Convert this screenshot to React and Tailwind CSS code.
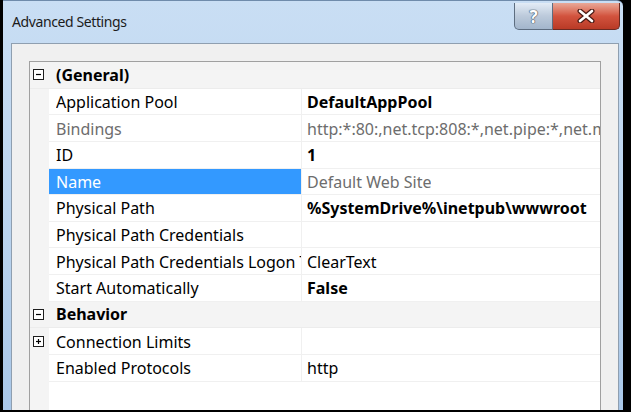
import React from 'react';

const rows = [
  { type: 'cat', label: '(General)', open: true },
  { label: 'Application Pool', value: 'DefaultAppPool', bold: true },
  { label: 'Bindings', value: 'http:*:80:,net.tcp:808:*,net.pipe:*,net.msmq.localhost,msmq.formatname:localhost', dim: true },
  { label: 'ID', value: '1', bold: true },
  { label: 'Name', value: 'Default Web Site', selected: true, valueDim: true },
  { label: 'Physical Path', value: '%SystemDrive%\\inetpub\\wwwroot', bold: true },
  { label: 'Physical Path Credentials', value: '' },
  { label: 'Physical Path Credentials Logon Type', value: 'ClearText' },
  { label: 'Start Automatically', value: 'False', bold: true },
  { type: 'cat', label: 'Behavior', open: true },
  { label: 'Connection Limits', value: '', expander: true },
  { label: 'Enabled Protocols', value: 'http' },
];

function Box({ open }) {
  return (
    <svg width="11" height="11" viewBox="0 0 11 11" className="shrink-0">
      <rect x="0.5" y="0.5" width="10" height="10" fill="#fff" stroke="#1e1e1e" />
      <path d="M3 5.5h5" stroke="#000" strokeWidth="1.2" />
      {!open && <path d="M5.5 3v5" stroke="#000" strokeWidth="1.2" />}
    </svg>
  );
}

export default function App() {
  return (
    <div className="w-[631px] h-[412px] bg-black pl-[3px] pr-[8px] pb-[2px] overflow-hidden" style={{ fontFamily: '"Noto Sans", "Open Sans", sans-serif' }}>
      {/* window frame */}
      <div className="h-full flex flex-col rounded-tr-[6px] bg-gradient-to-b from-[#c9def4] via-[#bcd5ef] to-[#a9c7e8] border-t border-[#6f8bab]">
        {/* title bar */}
        <div className="h-[42px] shrink-0 flex items-start justify-between pl-[9px]">
          <span className="mt-[14px] text-[14px] text-[#1b1b1b] tracking-[-0.4px] leading-none">Advanced Settings</span>
          <div className="flex mt-[2px] mr-[3px]">
            <div className="w-[39px] h-[27px] rounded-bl-[5px] border border-t-0 border-[#5d6d80] bg-gradient-to-b from-[#e3ecf6] via-[#bccadb] to-[#a3b6cc] flex items-center justify-center">
              <span className="text-[17px] font-bold text-white leading-none" style={{ textShadow: '0 0 1px #3a4a5c, 0 0 1px #3a4a5c, 0 0 1px #3a4a5c' }}>?</span>
            </div>
            <div className="w-[67px] h-[27px] rounded-br-[5px] border border-t-0 border-l-0 border-[#6b2a22] bg-gradient-to-b from-[#e8a898] via-[#d2533e] to-[#b93a26] flex items-center justify-center">
              <svg width="20" height="14" viewBox="0 0 20 14">
                <path d="M4 2l12 10M16 2L4 12" stroke="#4a1a14" strokeWidth="5" strokeLinecap="round" />
                <path d="M4 2l12 10M16 2L4 12" stroke="#fff" strokeWidth="2.6" strokeLinecap="round" />
              </svg>
            </div>
          </div>
        </div>

        {/* client area */}
        <div className="flex-1 min-h-0 ml-[8px] mr-[4px] border border-b-0 border-[#8f9fb0] bg-[#f0f0f0] pl-[17px] pr-[17px] pt-[17px] flex">
          <div className="flex-1 min-w-0 border border-b-0 border-[#a0a0a0] bg-white flex flex-col text-[16px]">
            {rows.map((r, i) =>
              r.type === 'cat' ? (
                <div key={i} className="h-[26.64px] shrink-0 flex items-center bg-[#f4f4f4] border-b border-[#ececec]">
                  <div className="w-[19px] shrink-0 flex justify-center pr-[2px]"><Box open={r.open} /></div>
                  <span className="pl-[7px] font-bold text-black">{r.label}</span>
                </div>
              ) : (
                <div key={i} className="h-[26.64px] shrink-0 flex">
                  <div className="w-[19px] shrink-0 bg-[#f4f4f4] flex items-center justify-center pr-[2px]">
                    {r.expander && <Box open={false} />}
                  </div>
                  <div className={`w-[253px] shrink-0 flex items-center pl-[7px] pt-[1px] overflow-hidden whitespace-nowrap border-b border-r border-[#f0f0f0] ${r.selected ? 'bg-[#3399ff] text-white' : r.dim ? 'text-[#6d6d6d]' : 'text-black'}`}>
                    <span className="block overflow-hidden">{r.label}</span>
                  </div>
                  <div className={`flex-1 min-w-0 flex items-center pl-[5px] pt-[1px] overflow-hidden whitespace-nowrap border-b border-[#f0f0f0] ${r.bold ? 'font-bold text-black' : r.dim || r.valueDim ? 'text-[#6d6d6d]' : 'text-black'}`}>
                    <span className="block overflow-hidden">{r.value}</span>
                  </div>
                </div>
              )
            )}
            <div className="flex-1 flex">
              <div className="w-[19px] bg-[#f4f4f4]" />
              <div className="flex-1" />
            </div>
          </div>
        </div>
      </div>
    </div>
  );
}
